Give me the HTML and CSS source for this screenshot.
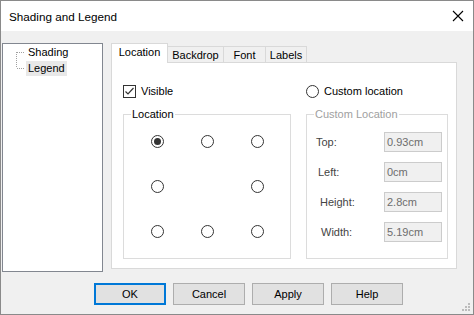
FILE: index.html
```html
<!DOCTYPE html>
<html lang="en">
<head>
    <meta charset="UTF-8">
    <title>Shading and Legend</title>
    <link rel="stylesheet" href="styles.css">
</head>
<body>

    <div class="window">
        <div class="titlebar">
            <span class="title">Shading and Legend</span>
            <svg class="close-icon" width="12" height="12" viewBox="0 0 12 12">
                <path d="M1 1 L11 11 M11 1 L1 11" stroke="#000" stroke-width="1.1" fill="none"/>
            </svg>
        </div>

        <div class="main">
            <!-- Дерево разделов -->
            <div class="tree">
                <div class="tree-branch">
                    <svg class="tree-lines" width="10" height="32" viewBox="0 0 10 32">
                        <path d="M0.5 8 V24 M1 8.5 H9 M1 24.5 H9" stroke="#a0a0a0" stroke-width="1" stroke-dasharray="1 1" fill="none"/>
                    </svg>
                    <ul class="tree-list">
                        <li><span class="tree-label">Shading</span></li>
                        <li><span class="tree-label selected">Legend</span></li>
                    </ul>
                </div>
            </div>

            <div class="tabs">
                <div class="tab-strip">
                    <div class="tab active">Location</div>
                    <div class="tab tab-backdrop">Backdrop</div>
                    <div class="tab tab-font">Font</div>
                    <div class="tab tab-labels">Labels</div>
                </div>

                <div class="tab-panel">
                    <div class="options-row">
                        <label class="check-option">
                            <span class="checkbox">
                                <svg width="11" height="11" viewBox="0 0 11 11">
                                    <path d="M1.5 5.5 L4 8 L9.5 2" stroke="#333" stroke-width="1.2" fill="none"/>
                                </svg>
                            </span>
                            Visible
                        </label>
                        <label class="radio-option">
                            <span class="radio"></span>
                            Custom location
                        </label>
                    </div>

                    <div class="groups-row">
                        <fieldset class="group group-location">
                            <legend>Location</legend>
                            <div class="radio-grid">
                                <span class="radio checked"></span>
                                <span class="radio"></span>
                                <span class="radio"></span>
                                <span class="radio"></span>
                                <span></span>
                                <span class="radio"></span>
                                <span class="radio"></span>
                                <span class="radio"></span>
                                <span class="radio"></span>
                            </div>
                        </fieldset>

                        <fieldset class="group group-custom">
                            <legend class="disabled">Custom Location</legend>
                            <div class="fields">
                                <div class="field-row">
                                    <span class="field-label">Top:</span>
                                    <span class="field-input">0.93cm</span>
                                </div>
                                <div class="field-row">
                                    <span class="field-label">Left:</span>
                                    <span class="field-input">0cm</span>
                                </div>
                                <div class="field-row">
                                    <span class="field-label">Height:</span>
                                    <span class="field-input">2.8cm</span>
                                </div>
                                <div class="field-row">
                                    <span class="field-label">Width:</span>
                                    <span class="field-input">5.19cm</span>
                                </div>
                            </div>
                        </fieldset>
                    </div>
                </div>
            </div>
        </div>

        <div class="buttons">
            <button class="dialog-button default">OK</button>
            <button class="dialog-button">Cancel</button>
            <button class="dialog-button">Apply</button>
            <button class="dialog-button">Help</button>
        </div>

        <svg class="grip" width="9" height="9" viewBox="0 0 9 9">
            <rect x="6" y="0" width="2" height="2" fill="#bcbcbc"/>
            <rect x="3" y="3" width="2" height="2" fill="#bcbcbc"/>
            <rect x="6" y="3" width="2" height="2" fill="#bcbcbc"/>
            <rect x="0" y="6" width="2" height="2" fill="#bcbcbc"/>
            <rect x="3" y="6" width="2" height="2" fill="#bcbcbc"/>
            <rect x="6" y="6" width="2" height="2" fill="#bcbcbc"/>
        </svg>
    </div>

</body>
</html>
```

FILE: styles.css
```css
* {
    box-sizing: border-box;
}

body {
    margin: 0;
    font-family: 'Liberation Sans', Arial, sans-serif;
    font-size: 11px;
    color: #000;
    background-color: #fff;
}

.window {
    position: relative;
    width: 474px;
    height: 315px;
    border: 1px solid #8a8a8a;
    background-color: #f0f0f0;
    display: flex;
    flex-direction: column;
}

.titlebar {
    height: 30px;
    background-color: #fff;
    display: flex;
    align-items: center;
    justify-content: space-between;
    padding: 0 9px 0 8px;
}

.title {
    font-size: 11.7px;
}

.main {
    display: flex;
    padding: 12px 0 0 1px;
}

/* Дерево */
.tree {
    width: 101px;
    height: 229px;
    border: 1px solid #828790;
    background-color: #fff;
    padding: 0 0 0 13px;
}

.tree-branch {
    display: flex;
}

.tree-list {
    list-style: none;
    margin: 0;
    padding: 0;
}

.tree-list li {
    height: 16px;
    line-height: 16px;
}

.tree-label {
    display: inline-block;
    padding: 0 2px;
    line-height: 15px;
}

.tree-label.selected {
    background-color: #e8e8e8;
}

/* Вкладки */
.tabs {
    width: 346px;
    margin-left: 8px;
}

.tab-strip {
    display: flex;
    align-items: flex-end;
    height: 19px;
}

.tab {
    height: 16px;
    line-height: 16px;
    border: 1px solid #d9d9d9;
    border-bottom: none;
    border-left: none;
    background-color: #f0f0f0;
    text-align: center;
}

.tab.active {
    width: 57px;
    height: 20px;
    line-height: 17px;
    margin-bottom: -1px;
    border-left: 1px solid #d9d9d9;
    background-color: #fff;
    position: relative;
    z-index: 1;
}

.tab-backdrop {
    width: 56px;
}

.tab-font {
    width: 42px;
}

.tab-labels {
    width: 41px;
}

.tab-panel {
    height: 207px;
    border: 1px solid #d9d9d9;
    background-color: #fff;
    padding: 21px 0 0 11px;
}

.options-row {
    display: flex;
    gap: 15px;
    height: 14px;
}

.check-option,
.radio-option {
    display: flex;
    align-items: center;
    gap: 5px;
}

.check-option {
    width: 168px;
}

.checkbox {
    width: 13px;
    height: 13px;
    border: 1px solid #333;
    display: flex;
    align-items: center;
    justify-content: center;
}

.radio {
    width: 13px;
    height: 13px;
    border: 1px solid #333;
    border-radius: 50%;
    background-color: #fff;
    display: flex;
    align-items: center;
    justify-content: center;
}

.radio.checked::after {
    content: '';
    width: 7px;
    height: 7px;
    border-radius: 50%;
    background-color: #333;
}

/* Группы */
.groups-row {
    display: flex;
    gap: 15px;
    margin-top: 10px;
}

.group {
    margin: 0;
    padding: 0;
    min-width: 0;
    height: 151px;
    border: 1px solid #dcdcdc;
}

.group legend {
    margin-left: 7px;
    padding: 0 1px;
    line-height: 13px;
}

.group legend.disabled {
    color: #a0a0a0;
}

.group-location {
    width: 168px;
}

.group-custom {
    width: 142px;
}

.radio-grid {
    display: grid;
    grid-template-columns: repeat(3, 13px);
    grid-auto-rows: 13px;
    column-gap: 37px;
    row-gap: 32px;
    padding: 14px 0 0 27px;
}

.fields {
    display: flex;
    flex-direction: column;
    gap: 10px;
    padding-top: 11px;
}

.field-row {
    display: flex;
    align-items: center;
    height: 20px;
}

.field-label {
    width: 77px;
    color: #444;
    padding-left: 9px;
}

.field-row:nth-child(2) .field-label {
    padding-left: 11px;
}

.field-row:nth-child(3) .field-label {
    padding-left: 13px;
}

.field-row:nth-child(4) .field-label {
    padding-left: 14px;
}

.field-input {
    width: 58px;
    height: 20px;
    line-height: 18px;
    border: 1px solid #cccccc;
    background-color: #f0f0f0;
    color: #6d6d6d;
    padding-left: 2px;
}

/* Кнопки */
.buttons {
    display: flex;
    gap: 7px;
    margin-top: 11px;
    padding-left: 93px;
}

.dialog-button {
    width: 72px;
    height: 22px;
    border: 1px solid #adadad;
    background-color: #e1e1e1;
    font-family: inherit;
    font-size: 11px;
    color: #000;
    padding: 0;
}

.dialog-button.default {
    border-color: #0078d7;
    box-shadow: inset 0 0 0 1px #0078d7;
}

.grip {
    position: absolute;
    right: 2px;
    bottom: 2px;
}
```
